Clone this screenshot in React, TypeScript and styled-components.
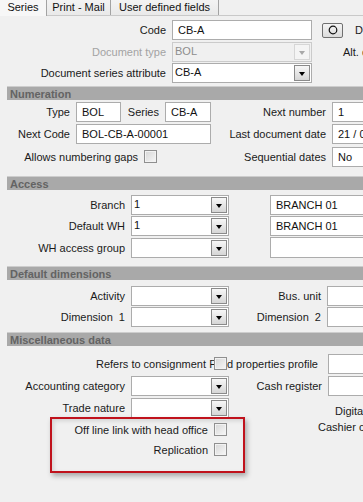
import React from "react";
import styled, {createGlobalStyle} from "styled-components";

const GlobalStyle = createGlobalStyle`
  body {
    margin: 0;
    background: #f0f0f0;
  }
`;

const Page = styled.div`
  width: 363px;
  height: 502px;
  overflow: hidden;
  background: #f0f0f0;
  font-family: "Liberation Sans", Arial, sans-serif;
  font-size: 11px;
  color: #1a1a1a;
`;

const TabBar = styled.div`
  display: flex;
  height: 16px;
  box-sizing: border-box;
  border-bottom: 1px solid #c9c9c9;
`;

const Tab = styled.div<{ $w: number; $active?: boolean }>`
  flex: none;
  width: ${p => p.$w}px;
  height: ${p => (p.$active ? 16 : 15)}px;
  box-sizing: border-box;
  display: flex;
  align-items: center;
  justify-content: center;
  padding-bottom: 2px;
  border-right: 1px solid #a3a3a3;
  background: ${p => (p.$active ? "#f7f7f7" : "linear-gradient(#f3f3f3, #e9e9e9)")};
  color: #111;
`;

const Row = styled.div<{ $h?: number; $mt?: number }>`
  display: flex;
  align-items: center;
  height: ${p => p.$h ?? 20}px;
  margin-top: ${p => p.$mt ?? 0}px;
  white-space: pre;
`;

const Label = styled.span<{ $w: number; $muted?: boolean; $ml?: number; $pr?: number }>`
  flex: none;
  width: ${p => p.$w}px;
  margin-left: ${p => p.$ml ?? 0}px;
  box-sizing: border-box;
  padding-right: ${p => p.$pr ?? 6}px;
  text-align: right;
  color: ${p => (p.$muted ? "#a3a3a3" : "#1a1a1a")};
`;

const TextBox = styled.div<{ $w: number; $h?: number }>`
  flex: none;
  width: ${p => p.$w}px;
  height: ${p => p.$h ?? 20}px;
  box-sizing: border-box;
  border: 1px solid #acacac;
  background: #fff;
  padding-left: 5px;
  display: flex;
  align-items: center;
  overflow: hidden;
  color: #111;
`;

const ComboBox = styled.div<{ $w: number; $disabled?: boolean }>`
  flex: none;
  width: ${p => p.$w}px;
  height: 20px;
  box-sizing: border-box;
  padding: 1px;
  display: flex;
  border: 1px solid ${p => (p.$disabled ? "#cbcbcb" : "#acacac")};
  background: ${p => (p.$disabled ? "#f0f0f0" : "#fff")};
`;

const ComboText = styled.span<{ $disabled?: boolean }>`
  flex: 1;
  padding-left: 1px;
  line-height: 15px;
  color: ${p => (p.$disabled ? "#8d8d8d" : "#111")};
`;

const DropButton = styled.span<{ $disabled?: boolean }>`
  flex: none;
  width: 16px;
  box-sizing: border-box;
  display: flex;
  align-items: center;
  justify-content: center;
  border: 1px solid ${p => (p.$disabled ? "#d6d6d6" : "#8a8a8a")};
  background: ${p => (p.$disabled ? "#f4f4f4" : "linear-gradient(#f7f7f7, #d6d6d6)")};
`;

const Arrow = styled.span<{ $disabled?: boolean }>`
  width: 0;
  height: 0;
  margin-top: 2px;
  border-left: 3.5px solid transparent;
  border-right: 3.5px solid transparent;
  border-top: 4px solid ${p => (p.$disabled ? "#a8a8a8" : "#000")};
`;

const CheckBox = styled.span`
  flex: none;
  position: relative;
  z-index: 1;
  width: 13px;
  height: 13px;
  box-sizing: border-box;
  border: 1px solid #8f8f8f;
  background: linear-gradient(135deg, #d6d6d6, #f7f7f7);
  box-shadow: inset 0 0 0 1px #f2f2f2;
`;

const SmallButton = styled.span`
  flex: none;
  width: 21px;
  height: 15px;
  margin-left: 10px;
  box-sizing: border-box;
  display: flex;
  align-items: center;
  justify-content: center;
  border: 1px solid #707070;
  border-radius: 2px;
  background: linear-gradient(#f4f4f4, #dcdcdc);
`;

const Peek = styled.span<{ $ml: number; $pt?: number }>`
  flex: none;
  margin-left: ${p => p.$ml}px;
  padding-top: ${p => p.$pt ?? 0}px;
  color: #1a1a1a;
`;

const SectionHeader = styled.div<{ $mt: number }>`
  margin-top: ${p => p.$mt}px;
  margin-left: 7px;
  height: 14px;
  box-sizing: border-box;
  padding-left: 3px;
  display: flex;
  align-items: center;
  border-top: 1px solid #cdcdcd;
  background: #a9a9a9;
  color: #636363;
  font-weight: bold;
`;

const HighlightRow = styled.div`
  display: flex;
  align-items: flex-start;
`;

const Highlight = styled.div`
  flex: none;
  margin-left: 50px;
  width: 195px;
  height: 56px;
  box-sizing: border-box;
  border: 2px solid #c0121c;
  box-shadow: 2px 3px 5px rgba(0, 0, 0, 0.3), inset 2px 2px 4px rgba(0, 0, 0, 0.12);
  white-space: pre;
`;

const Combo = ({w, value, disabled}: { w: number; value?: string; disabled?: boolean }) => (
    <ComboBox $w={w} $disabled={disabled}>
        <ComboText $disabled={disabled}>{value}</ComboText>
        <DropButton $disabled={disabled}><Arrow $disabled={disabled}/></DropButton>
    </ComboBox>
);

export default function App() {
    return (
        <Page>
            <GlobalStyle/>
            <TabBar>
                <Tab $w={47} $active>Series</Tab>
                <Tab $w={64}>Print - Mail</Tab>
                <Tab $w={108}>User defined fields</Tab>
            </TabBar>

            <Row $mt={4}>
                <Label $w={172}>Code</Label>
                <TextBox $w={140}>CB-A</TextBox>
                <SmallButton>
                    <svg width="10" height="10" viewBox="0 0 10 10">
                        <circle cx="5" cy="5" r="3.8" fill="none" stroke="#111" strokeWidth="1.2"/>
                    </svg>
                </SmallButton>
                <Peek $ml={12}>Default</Peek>
            </Row>
            <Row $mt={2}>
                <Label $w={172} $muted>Document type</Label>
                <Combo w={140} value="BOL" disabled/>
                <Peek $ml={31}>Alt. doc</Peek>
            </Row>
            <Row $mt={1}>
                <Label $w={172}>Document series attribute</Label>
                <Combo w={140} value="CB-A"/>
            </Row>

            <SectionHeader $mt={3}>Numeration</SectionHeader>
            <Row $mt={2}>
                <Label $w={76}>Type</Label>
                <TextBox $w={45}>BOL</TextBox>
                <Label $w={44}>Series</Label>
                <TextBox $w={46}>CB-A</TextBox>
                <Label $w={121}>Next number</Label>
                <TextBox $w={80}>1</TextBox>
            </Row>
            <Row $mt={2}>
                <Label $w={76}>Next Code</Label>
                <TextBox $w={135}>BOL-CB-A-00001</TextBox>
                <Label $w={121}>Last document date</Label>
                <TextBox $w={80}>21 / 07 / 2014</TextBox>
            </Row>
            <Row $mt={2} $h={21}>
                <Label $w={144}>Allows numbering gaps</Label>
                <CheckBox/>
                <Label $w={175}>Sequential dates</Label>
                <TextBox $w={80}>No</TextBox>
            </Row>

            <SectionHeader $mt={9}>Access</SectionHeader>
            <Row $mt={5}>
                <Label $w={131}>Branch</Label>
                <Combo w={98} value="1"/>
                <Peek $ml={41}><TextBox $w={110}>BRANCH 01</TextBox></Peek>
            </Row>
            <Row $mt={1}>
                <Label $w={131}>Default WH</Label>
                <Combo w={98} value="1"/>
                <Peek $ml={41}><TextBox $w={110}>BRANCH 01</TextBox></Peek>
            </Row>
            <Row $mt={1} $h={21}>
                <Label $w={131}>WH access group</Label>
                <Combo w={98}/>
                <Peek $ml={41}><TextBox $w={110} $h={21}/></Peek>
            </Row>

            <SectionHeader $mt={8}>Default dimensions</SectionHeader>
            <Row $mt={6}>
                <Label $w={131}>Activity</Label>
                <Combo w={98}/>
                <Label $w={98}>Bus. unit</Label>
                <TextBox $w={80}/>
            </Row>
            <Row $mt={1}>
                <Label $w={131}>Dimension  1</Label>
                <Combo w={98}/>
                <Label $w={98}>Dimension  2</Label>
                <TextBox $w={80}/>
            </Row>

            <SectionHeader $mt={5}>Miscellaneous data</SectionHeader>
            <Row $mt={7} $h={21}>
                <Label $w={214} $pr={8}>Refers to consignment</Label>
                <CheckBox/>
                <Label $w={123} $ml={-22} $pr={10}>Field properties profile</Label>
                <TextBox $w={80}/>
            </Row>
            <Row $mt={2}>
                <Label $w={131}>Accounting category</Label>
                <Combo w={98}/>
                <Label $w={99}>Cash register</Label>
                <TextBox $w={80}/>
            </Row>
            <Row $mt={2} $h={19}>
                <Label $w={131}>Trade nature</Label>
                <Combo w={98}/>
                <Peek $ml={106} $pt={6}>Digital signature</Peek>
            </Row>
            <HighlightRow>
                <Highlight>
                    <Row $mt={1} $h={19}>
                        <Label $w={162}>Off line link with head office</Label>
                        <CheckBox/>
                    </Row>
                    <Row $mt={1} $h={19}>
                        <Label $w={162}>Replication</Label>
                        <CheckBox/>
                    </Row>
                </Highlight>
                <Peek $ml={73} $pt={4}>Cashier code</Peek>
            </HighlightRow>
        </Page>
    );
}
